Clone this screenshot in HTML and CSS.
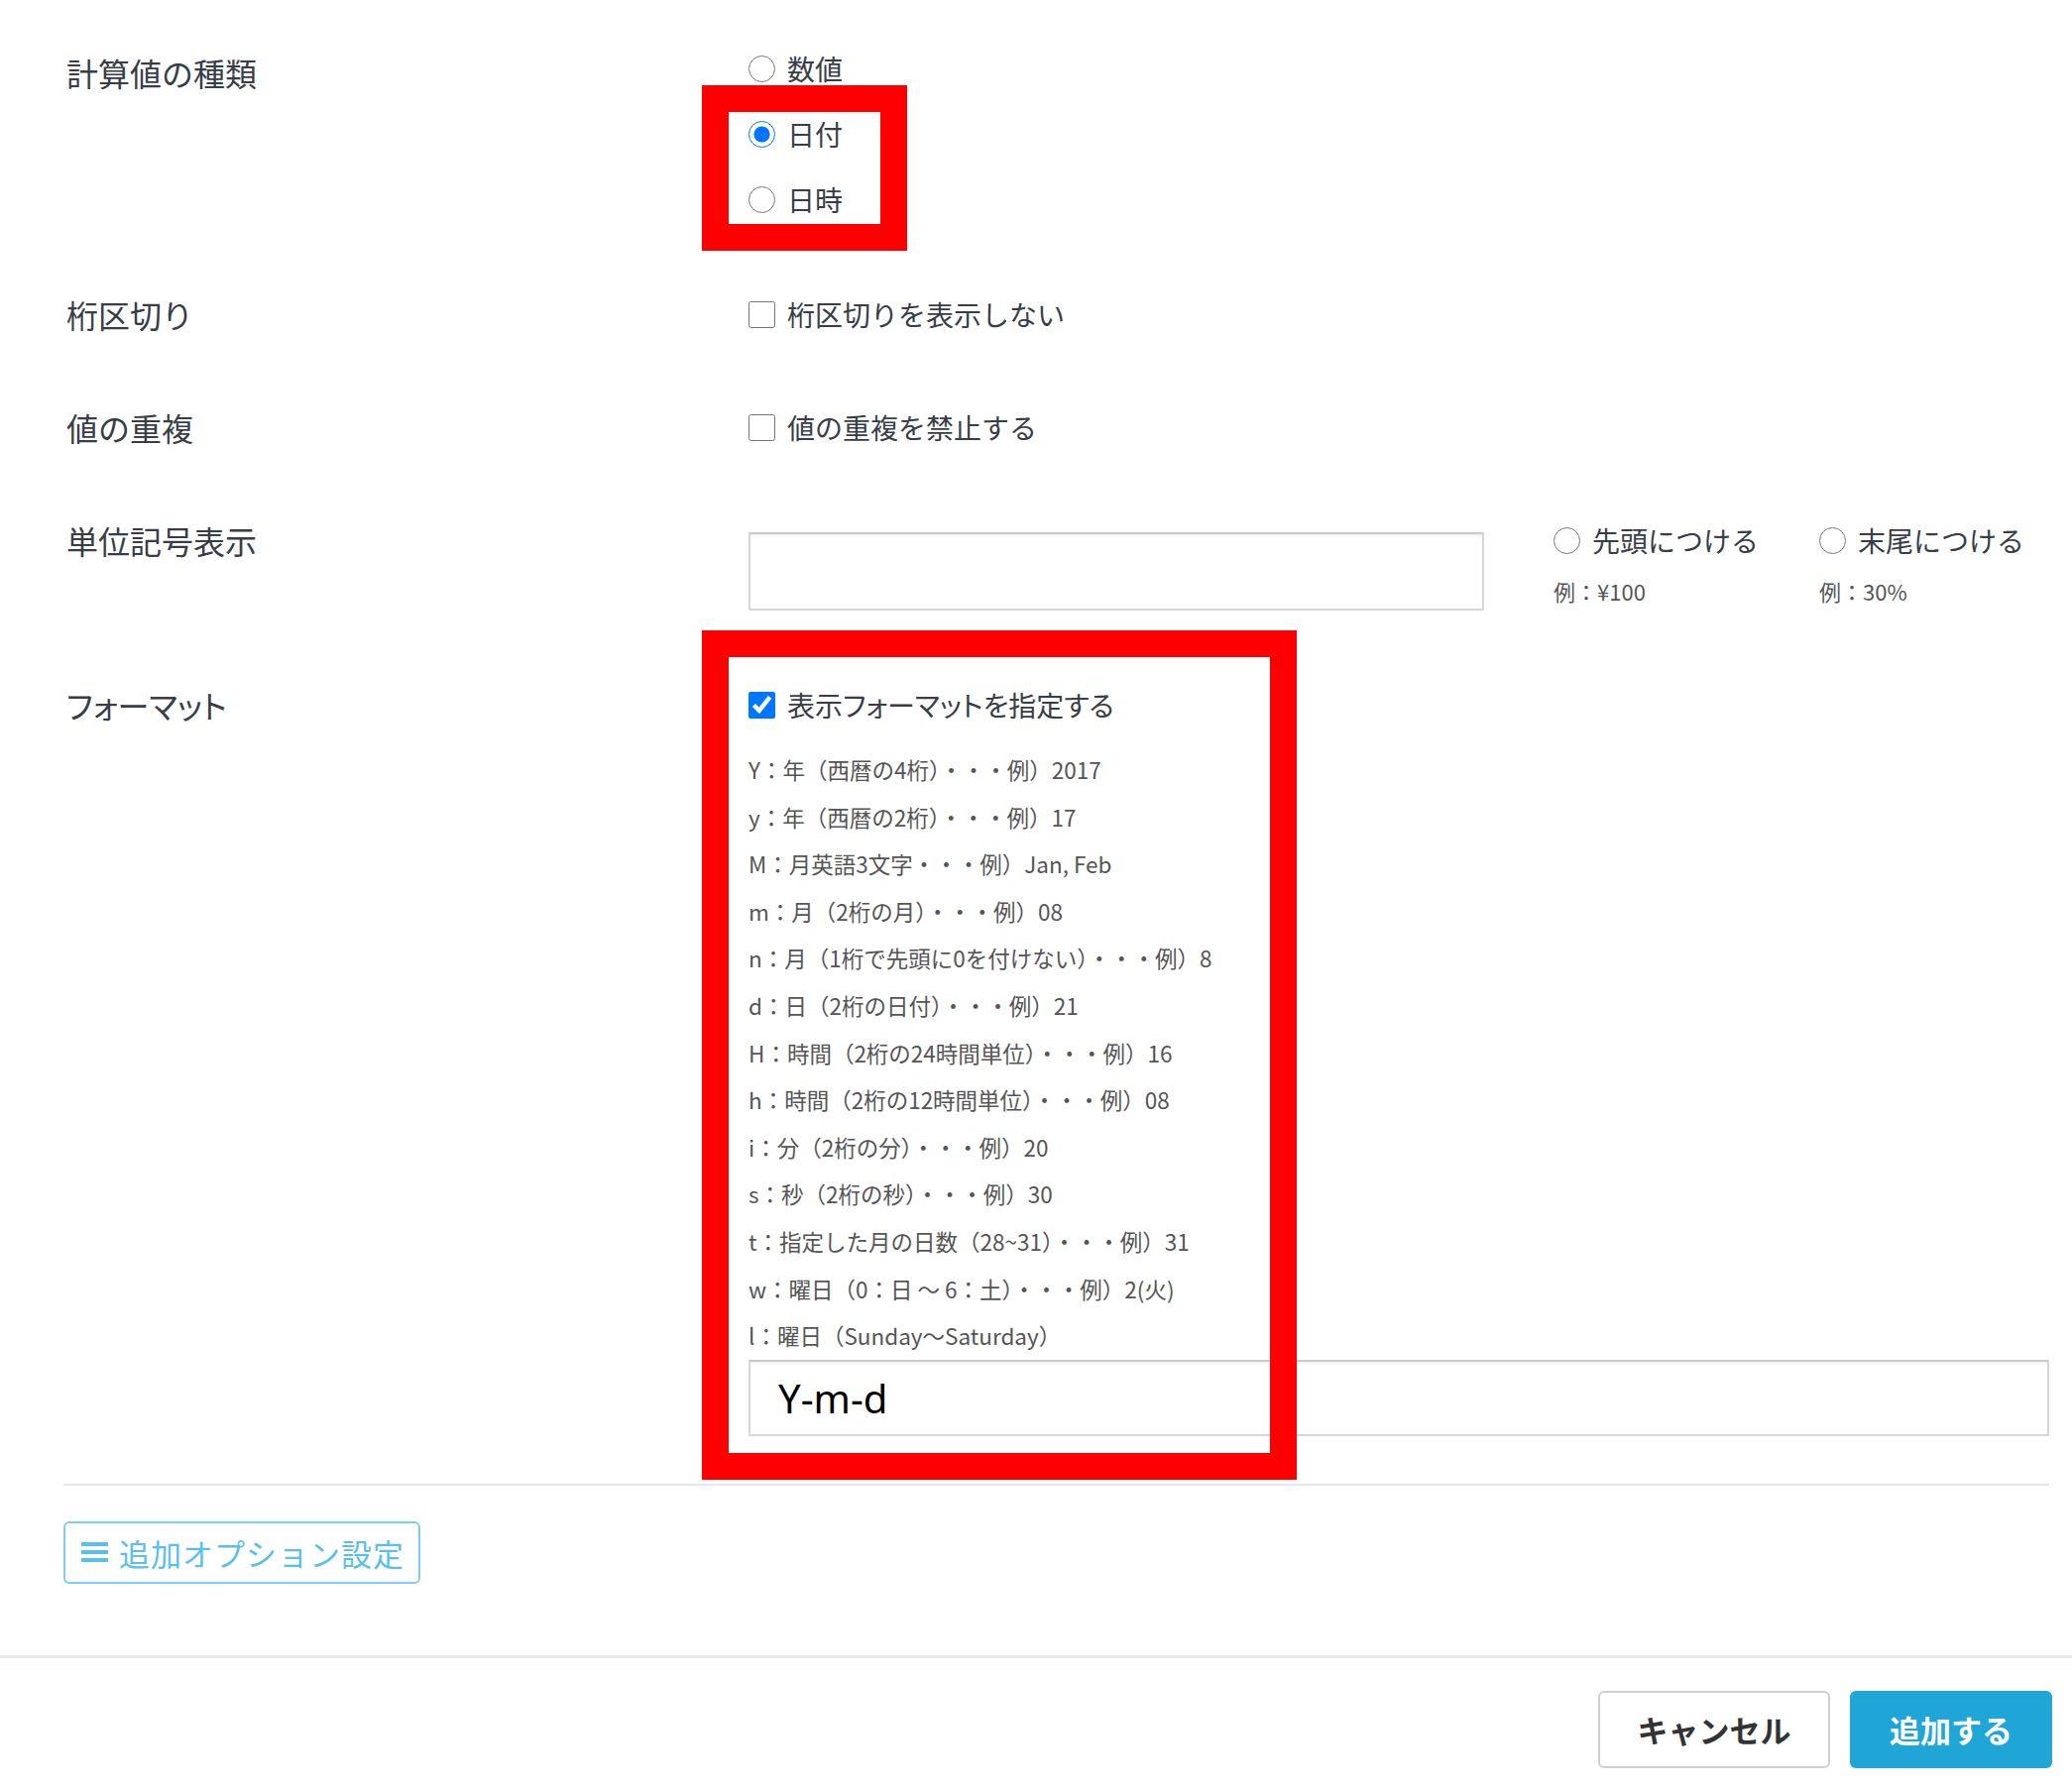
FILE: index.html
```html
<!DOCTYPE html>
<html lang="ja">
<head>
  <meta charset="UTF-8">
  <title>計算値の設定</title>
  <link rel="stylesheet" href="styles.css">
</head>
<body>

  <div class="page">
    <div class="form">

      <div class="row first">
        <div class="label">計算値の種類</div>
        <div class="value">
          <label class="opt"><input type="radio" name="kind"> 数値</label>
          <label class="opt"><input type="radio" name="kind" checked> 日付</label>
          <label class="opt"><input type="radio" name="kind"> 日時</label>
        </div>
      </div>

      <div class="row">
        <div class="label">桁区切り</div>
        <div class="value">
          <label class="opt"><input type="checkbox"> 桁区切りを表示しない</label>
        </div>
      </div>

      <div class="row">
        <div class="label">値の重複</div>
        <div class="value">
          <label class="opt"><input type="checkbox"> 値の重複を禁止する</label>
        </div>
      </div>

      <div class="row unit-row">
        <div class="label">単位記号表示</div>
        <div class="value unit">
          <input type="text" class="text-input unit-input">
          <div class="unit-pos">
            <label class="opt"><input type="radio" name="pos"> 先頭につける</label>
            <p class="hint">例：¥100</p>
          </div>
          <div class="unit-pos">
            <label class="opt"><input type="radio" name="pos"> 末尾につける</label>
            <p class="hint">例：30%</p>
          </div>
        </div>
      </div>

      <div class="row format-row">
        <div class="label kana">フォーマット</div>
        <div class="value">
          <label class="opt kana"><input type="checkbox" checked> 表示フォーマットを指定する</label>
          <ul class="format-help">
            <li>Y：年（西暦の4桁）・・・例）2017</li>
            <li>y：年（西暦の2桁）・・・例）17</li>
            <li>M：月英語3文字・・・例）Jan, Feb</li>
            <li>m：月（2桁の月）・・・例）08</li>
            <li>n：月（1桁で先頭に0を付けない）・・・例）8</li>
            <li>d：日（2桁の日付）・・・例）21</li>
            <li>H：時間（2桁の24時間単位）・・・例）16</li>
            <li>h：時間（2桁の12時間単位）・・・例）08</li>
            <li>i：分（2桁の分）・・・例）20</li>
            <li>s：秒（2桁の秒）・・・例）30</li>
            <li>t：指定した月の日数（28~31）・・・例）31</li>
            <li>w：曜日（0：日 ～ 6：土）・・・例）2(火)</li>
            <li>l：曜日（Sunday～Saturday）</li>
          </ul>
          <input type="text" class="text-input format-input" value="Y-m-d">
        </div>
      </div>

      <hr class="divider">

      <button class="btn-options">
        <svg width="28" height="22" viewBox="0 0 28 22"><rect x="0" y="1" width="27" height="4"/><rect x="0" y="9" width="27" height="4"/><rect x="0" y="17" width="27" height="4"/></svg>
        追加オプション設定
      </button>
    </div>

    <div class="footer">
      <button class="btn btn-cancel">キャンセル</button>
      <button class="btn btn-add">追加する</button>
    </div>

    <!-- annotation frames -->
    <div class="mark mark-kind"></div>
    <div class="mark mark-format"></div>
  </div>

</body>
</html>
```

FILE: styles.css
```css
body {
  margin: 0;
  background-color: #fff;
  font-family: "Noto Sans CJK JP", "Noto Sans", sans-serif;
  color: #383d47;
}
.page {
  position: relative;
  width: 2090px;
  height: 1805px;
}
.form {
  padding: 36px 23px 0 64px;
}
.row {
  display: grid;
  grid-template-columns: 691px 1fr;
  margin-top: 48px;
}
.row.first {
  margin-top: 0;
}
.row:nth-child(2) {
  margin-top: 50px;
}
.format-row {
  margin-top: 62px;
}
.label {
  font-size: 32px;
  line-height: 66px;
  padding-left: 3px;
}
.row.first .label {
  line-height: 74px;
}
.kana {
  font-feature-settings: "palt";
}
.value {
  display: flex;
  flex-direction: column;
  align-items: flex-start;
}
.opt {
  display: flex;
  align-items: center;
  height: 66px;
  font-size: 28px;
  white-space: nowrap;
}
.opt input {
  width: 27px;
  height: 27px;
  margin: 0 12px 0 0;
}
.unit {
  flex-direction: row;
}
.text-input {
  box-sizing: border-box;
  border: 2px solid #d6d6d6;
  border-top-color: #c9c9c9;
  box-shadow: inset 0 2px 2px rgba(0, 0, 0, 0.05);
  border-radius: 0;
  outline: none;
  font-family: "Noto Sans", sans-serif;
}
.unit-input {
  width: 742px;
  height: 79px;
  margin-top: 25px;
  margin-right: 70px;
}
.unit-pos {
  width: 268px;
}
.hint {
  margin: 0;
  font-size: 22px;
  line-height: 36px;
  color: #555;
}
.format-help {
  list-style: none;
  margin: 9px 0 0;
  padding: 0;
  font-size: 22.5px;
  line-height: 47.6px;
  color: #555;
}
.format-input {
  width: 1312px;
  height: 77px;
  padding: 0 28px;
  font-size: 40px;
  color: #000;
}
.divider {
  border: none;
  border-top: 2px solid #e6e6e6;
  margin: 48px 0 0;
}
.btn-options {
  display: flex;
  align-items: center;
  gap: 10px;
  margin-top: 36px;
  height: 63px;
  width: 360px;
  padding: 0 16px;
  background-color: #fff;
  border: 2px solid #7fcdf2;
  border-radius: 6px;
  color: #5bbfec;
  font-family: inherit;
  font-size: 31px;
  letter-spacing: 1px;
  white-space: nowrap;
}
.btn-options svg {
  fill: #5bbfec;
  flex: none;
}
.footer {
  margin-top: 72px;
  border-top: 3px solid #e8eaee;
  padding: 33px 20px 0 0;
  display: flex;
  justify-content: flex-end;
  gap: 20px;
}
.btn {
  height: 78px;
  border-radius: 6px;
  font-family: inherit;
  font-size: 31px;
  font-weight: bold;
}
.btn-cancel {
  width: 234px;
  background-color: #fff;
  border: 2px solid #cfcfcf;
  color: #333;
}
.btn-add {
  width: 204px;
  background-color: #1fa6d7;
  border: none;
  color: #fff;
}
.mark {
  position: absolute;
  box-sizing: border-box;
  border: 27px solid #ff0000;
}
.mark-kind {
  left: 708px;
  top: 86px;
  width: 207px;
  height: 167px;
}
.mark-format {
  left: 708px;
  top: 636px;
  width: 600px;
  height: 857px;
}
```
